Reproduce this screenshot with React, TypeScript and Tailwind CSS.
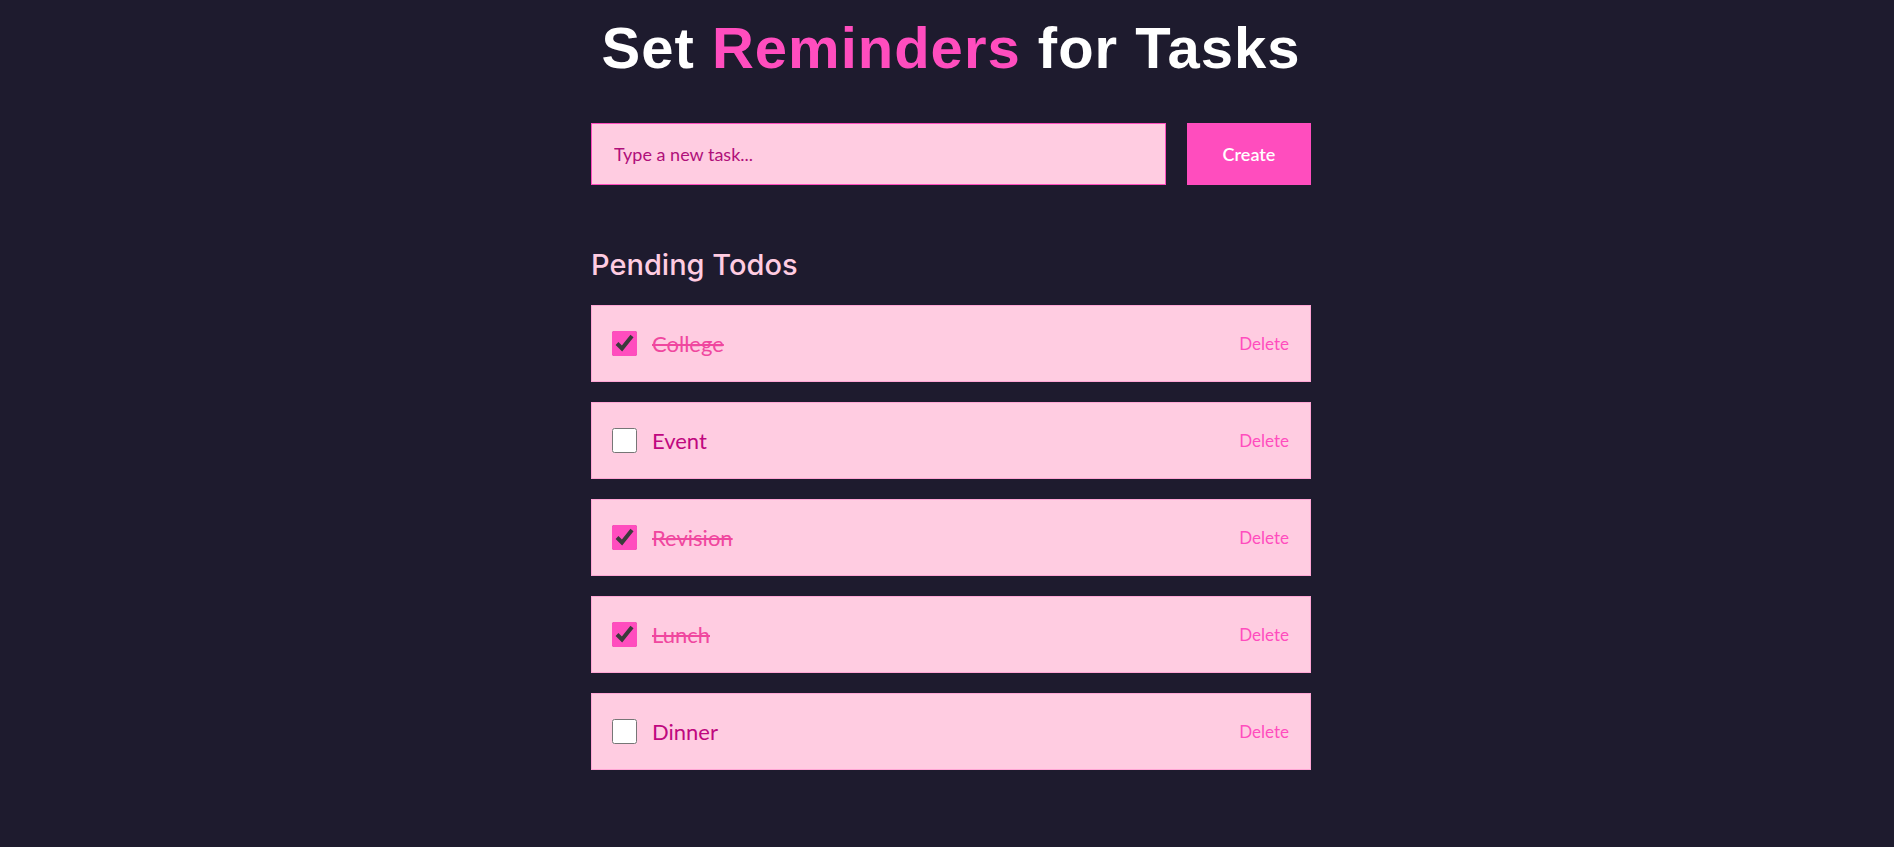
import { useState } from "react";

type Todo = { id: number; title: string; done: boolean };

const initialTodos: Todo[] = [
  { id: 1, title: "College", done: true },
  { id: 2, title: "Event", done: false },
  { id: 3, title: "Revision", done: true },
  { id: 4, title: "Lunch", done: true },
  { id: 5, title: "Dinner", done: false },
];

export default function App() {
  const [todos, setTodos] = useState<Todo[]>(initialTodos);
  const [text, setText] = useState("");

  const toggle = (id: number) =>
    setTodos(todos.map((t) => (t.id === id ? { ...t, done: !t.done } : t)));
  const remove = (id: number) => setTodos(todos.filter((t) => t.id !== id));
  const create = () => {
    if (!text.trim()) return;
    setTodos([...todos, { id: Date.now(), title: text.trim(), done: false }]);
    setText("");
  };

  return (
    <div className="min-h-[847px] w-full bg-[#1e1b2e] pl-2 font-['Lato',sans-serif]">
      <div className="mx-auto flex w-[720px] flex-col pt-[19px]">
        <h1 className="text-center font-['Liberation_Sans',Arial,sans-serif] text-[58px] leading-none font-bold tracking-[1px] text-white">
          Set <span className="text-[#ff4dbe]">Reminders</span> for Tasks
        </h1>

        <div className="mt-[46px] flex gap-[21px]">
          <input
            value={text}
            onChange={(e) => setText(e.target.value)}
            placeholder="Type a new task..."
            className="h-[62px] flex-1 border border-[#ff4dbe] bg-[#ffcce1] px-[22px] text-[18px] text-[#b0107a] outline-none placeholder:text-[#b0107a]"
          />
          <button
            onClick={create}
            className="h-[62px] w-[124px] bg-[#ff4dbe] text-[18px] font-semibold text-white"
          >
            Create
          </button>
        </div>

        <h2 className="mt-[65px] font-['Inter',sans-serif] text-[29px] leading-none font-medium text-[#ffcce1]">
          Pending Todos
        </h2>

        <div className="mt-[26px] flex flex-col gap-[20px]">
          {todos.map((todo) => (
            <div
              key={todo.id}
              className="flex h-[77px] items-center border border-[#ffa6d5] bg-[#ffcce1] pr-[21px] pl-[20px]"
            >
              <input
                type="checkbox"
                checked={todo.done}
                onChange={() => toggle(todo.id)}
                className="m-0 h-[25px] w-[25px] accent-[#ff4dbe]"
              />
              <span
                className={
                  todo.done
                    ? "ml-[15px] text-[22px] text-[#f0479f] line-through"
                    : "ml-[15px] text-[22px] text-[#c0087f]"
                }
              >
                {todo.title}
              </span>
              <button
                onClick={() => remove(todo.id)}
                className="ml-auto text-[17px] text-[#ff4dbe]"
              >
                Delete
              </button>
            </div>
          ))}
        </div>
      </div>
    </div>
  );
}
